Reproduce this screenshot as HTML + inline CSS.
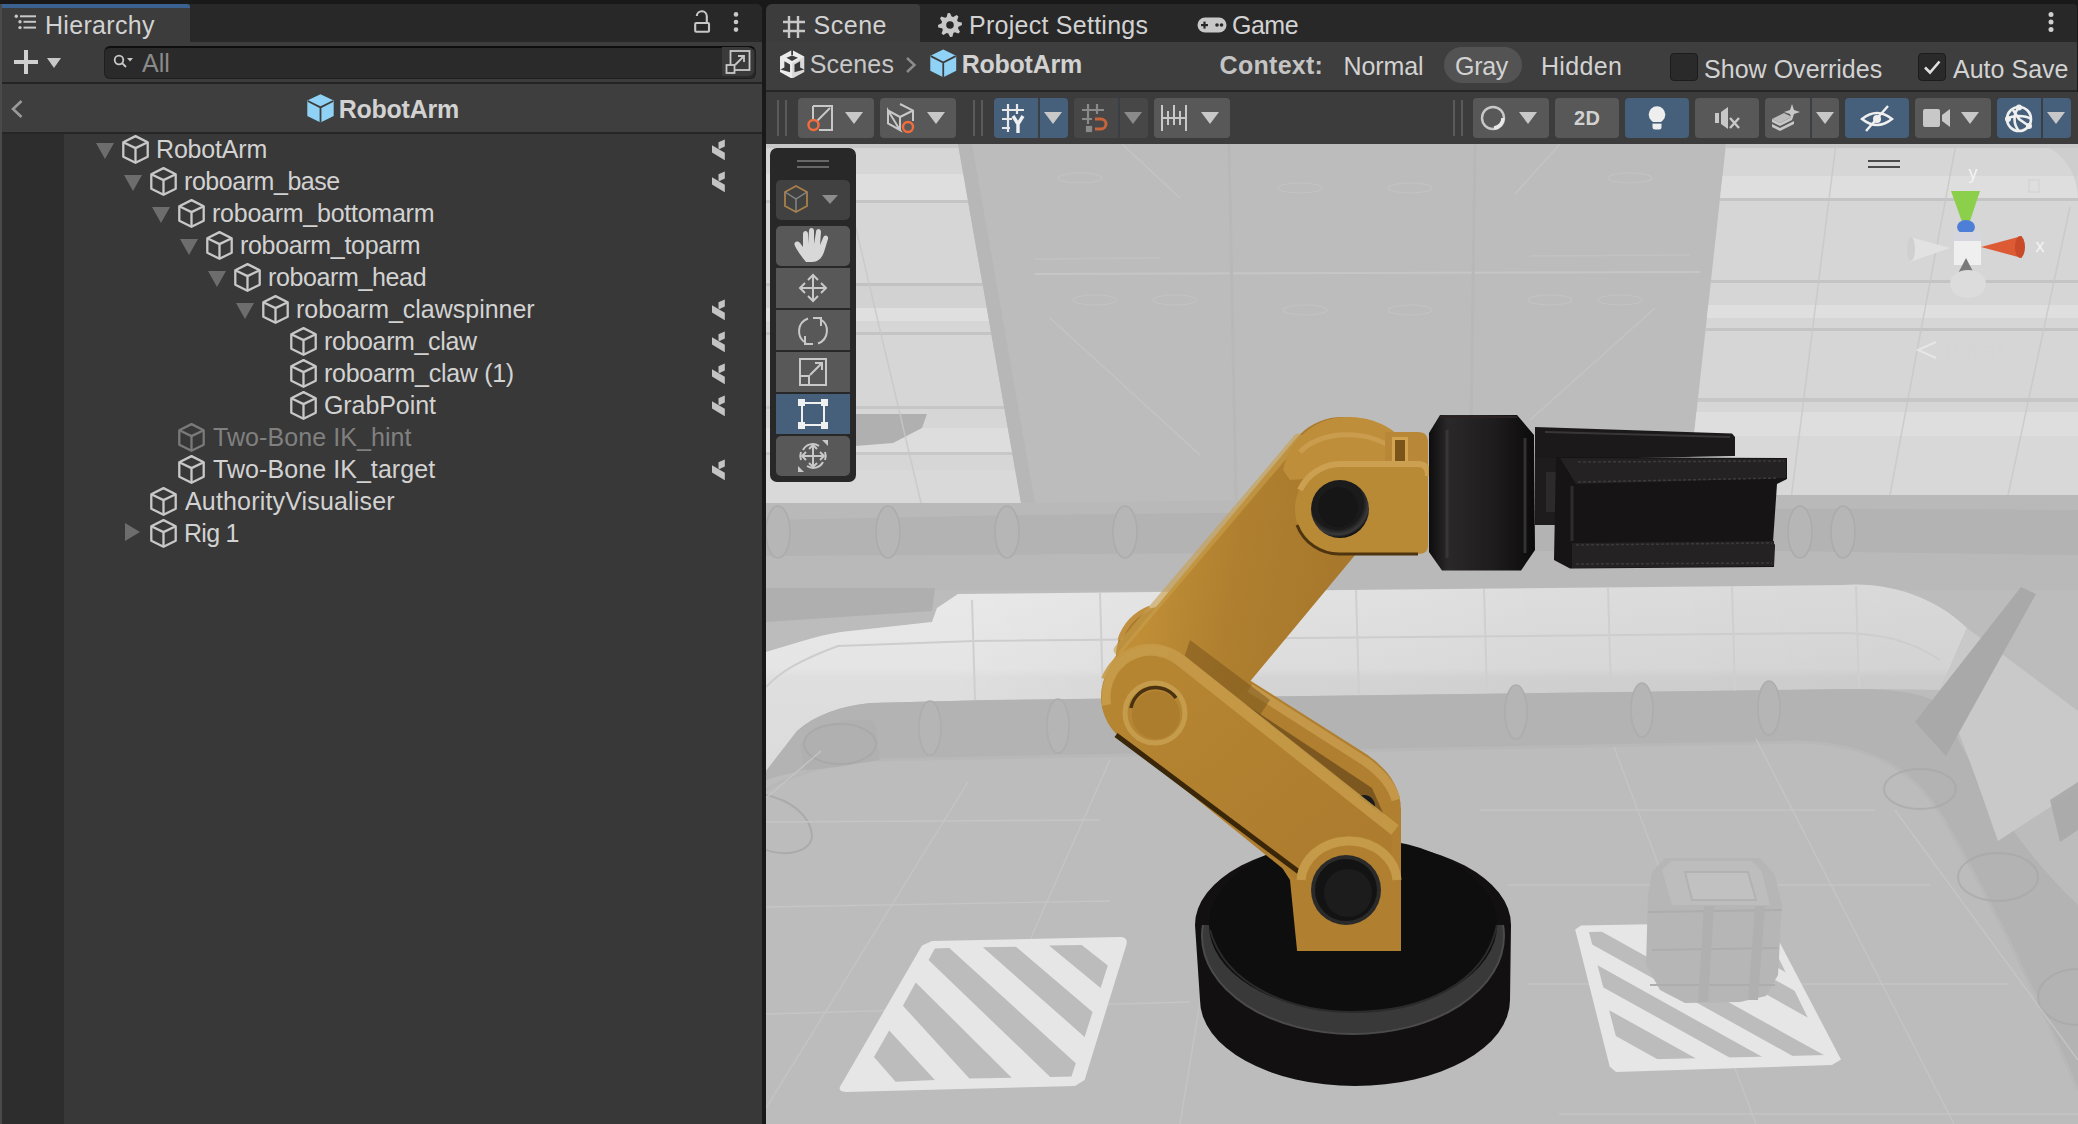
<!DOCTYPE html>
<html><head><meta charset="utf-8"><style>
html,body{margin:0;padding:0;width:2078px;height:1124px;overflow:hidden;background:#191919;font-family:'Liberation Sans', sans-serif}
</style></head><body>
<div style="position:relative;width:2078px;height:1124px;overflow:hidden">
<div style="position:absolute;left:0;top:4px;width:762px;height:1120px;background:#383838;border-top-right-radius:6px;overflow:hidden"><div style="position:absolute;left:0;top:0;width:762px;height:38px;background:#282828"></div><div style="position:absolute;left:2px;top:0;width:188px;height:38px;background:#3c3c3c;border-top-right-radius:4px"></div><div style="position:absolute;left:0;top:0;width:190px;height:4px;background:#3a6190;border-top-right-radius:3px"></div></div><div style="position:absolute;left:0;top:4px;width:2px;height:1120px;background:#4a4a4a"></div><svg style="position:absolute;left:14px;top:14px" width="24" height="18" viewBox="0 0 24 18"><g fill="#c8c8c8"><circle cx="2.3" cy="2.3" r="1.7"/><circle cx="6" cy="7.8" r="1.7"/><circle cx="6" cy="13.6" r="1.7"/><rect x="6" y="1.3" width="16" height="2"/><rect x="9.5" y="6.8" width="12.5" height="2"/><rect x="9.5" y="12.6" width="12.5" height="2"/></g></svg><div style="position:absolute;left:45px;top:13px;font:normal 25px/25px 'Liberation Sans', sans-serif;color:#d2d2d2;white-space:pre;letter-spacing:0.32px">Hierarchy</div><svg style="position:absolute;left:690px;top:10px" width="24" height="24" viewBox="690 10 24 24"><g fill="none" stroke="#c8c8c8" stroke-width="2.1"><path d="M696.8 16 A5 5 0 0 1 706.8 16.5 V23"/><rect x="695.2" y="23" width="13.8" height="8.8" rx="1"/></g></svg><svg style="position:absolute;left:731px;top:11px" width="10" height="24" viewBox="0 0 10 24"><g fill="#c8c8c8"><circle cx="5" cy="3.4" r="2.3"/><circle cx="5" cy="11" r="2.3"/><circle cx="5" cy="18.6" r="2.3"/></g></svg><div style="position:absolute;left:2px;top:42px;width:760px;height:40px;background:#3c3c3c"></div><div style="position:absolute;left:2px;top:82px;width:760px;height:2px;background:#242424"></div><svg style="position:absolute;left:13px;top:50px" width="26" height="26" viewBox="0 0 26 26"><g fill="#d0d0d0"><rect x="11" y="0" width="4" height="24"/><rect x="1" y="10" width="24" height="4"/></g></svg><svg style="position:absolute;left:47px;top:58px" width="14" height="10" viewBox="0 0 14 10"><path d="M0 0 L14 0 L7.0 10 Z" fill="#c8c8c8"/></svg><div style="position:absolute;left:104px;top:46px;width:650px;height:30px;background:#2a2a2a;border:1px solid #1f1f1f;border-top:2px solid #0e0e0e;border-radius:6px"></div><div style="position:absolute;left:722px;top:47px;width:32px;height:29px;background:#3a3a3a;border-radius:0 6px 6px 0"></div><svg style="position:absolute;left:113px;top:54px" width="22" height="18" viewBox="0 0 22 18"><g fill="none" stroke="#c8c8c8" stroke-width="1.8"><circle cx="6" cy="6" r="4.3"/><path d="M9 9 L13 13"/></g><path d="M14 4 L20 4 L17 7.5 Z" fill="#c8c8c8"/></svg><div style="position:absolute;left:142px;top:50.5px;font:normal 25px/25px 'Liberation Sans', sans-serif;color:#8a8a8a;white-space:pre;">All</div><svg style="position:absolute;left:725px;top:49px" width="26" height="26" viewBox="0 0 26 26"><g fill="none" stroke="#c8c8c8" stroke-width="1.8"><rect x="5.5" y="2" width="19" height="19"/><rect x="1.5" y="16" width="8" height="8" fill="#3a3a3a"/><path d="M10 16 L19 7 M13 7 L19 7 L19 13"/></g></svg><div style="position:absolute;left:2px;top:84px;width:760px;height:48px;background:#3e3e3e"></div><div style="position:absolute;left:2px;top:132px;width:760px;height:2px;background:#262626"></div><svg style="position:absolute;left:10px;top:99px" width="14" height="20" viewBox="0 0 14 20"><path d="M11.5 2 L3 10 L11.5 18" fill="none" stroke="#9a9a9a" stroke-width="2.6"/></svg><svg style="position:absolute;left:306.5px;top:93.7px" width="27" height="29" viewBox="0 0 27 29"><path d="M13.5 0.3 L26.7 6.6 L26.7 21.9 L13.5 28.6 L0.3 21.9 L0.3 6.6 Z" fill="#8fd2f5"/><path d="M0.8 7 L13.5 13.4 L26.2 7 M13.5 13.4 L13.5 28.6" fill="none" stroke="#3e3e3e" stroke-width="1.8"/></svg><div style="position:absolute;left:338.7px;top:97px;font:bold 25px/25px 'Liberation Sans', sans-serif;color:#d2d2d2;white-space:pre;letter-spacing:-0.25px">RobotArm</div><div style="position:absolute;left:2px;top:134px;width:62px;height:990px;background:#2d2d2d"></div><svg style="position:absolute;left:96px;top:143px" width="18" height="16" viewBox="0 0 18 16"><path d="M0 0 L18 0 L9.0 16 Z" fill="#6d6d6d"/></svg><svg style="position:absolute;left:120.5px;top:134px;opacity:1.0" width="30" height="31" viewBox="-1.5 -1.5 30 31"><g fill="none" stroke="#c8c8c8" stroke-width="2.3" stroke-linejoin="round"><path d="M13 0.6 L25.2 6.7 L25.2 21.2 L13 27.3 L0.8 21.2 L0.8 6.7 Z"/><path d="M0.8 6.7 L13 12.6 L25.2 6.7 M13 12.6 L13 27.3"/></g></svg><div style="position:absolute;left:156px;top:136.5px;font:normal 25px/25px 'Liberation Sans', sans-serif;color:#d2d2d2;white-space:pre;letter-spacing:-0.17px">RobotArm</div><svg style="position:absolute;left:712px;top:139px" width="14" height="22" viewBox="0 0 14 22"><g fill="#c4c4c4"><path d="M6.5 3.2 L12.8 0.5 L12.8 7.4 L7.6 10.1 L6.5 9.6 Z"/><path d="M0 6.3 L12.8 13.8 L12.8 21.2 L0 13.6 Z"/></g></svg><svg style="position:absolute;left:124px;top:175px" width="18" height="16" viewBox="0 0 18 16"><path d="M0 0 L18 0 L9.0 16 Z" fill="#6d6d6d"/></svg><svg style="position:absolute;left:148.5px;top:166px;opacity:1.0" width="30" height="31" viewBox="-1.5 -1.5 30 31"><g fill="none" stroke="#c8c8c8" stroke-width="2.3" stroke-linejoin="round"><path d="M13 0.6 L25.2 6.7 L25.2 21.2 L13 27.3 L0.8 21.2 L0.8 6.7 Z"/><path d="M0.8 6.7 L13 12.6 L25.2 6.7 M13 12.6 L13 27.3"/></g></svg><div style="position:absolute;left:184px;top:168.5px;font:normal 25px/25px 'Liberation Sans', sans-serif;color:#d2d2d2;white-space:pre;letter-spacing:-0.45px">roboarm_base</div><svg style="position:absolute;left:712px;top:171px" width="14" height="22" viewBox="0 0 14 22"><g fill="#c4c4c4"><path d="M6.5 3.2 L12.8 0.5 L12.8 7.4 L7.6 10.1 L6.5 9.6 Z"/><path d="M0 6.3 L12.8 13.8 L12.8 21.2 L0 13.6 Z"/></g></svg><svg style="position:absolute;left:152px;top:207px" width="18" height="16" viewBox="0 0 18 16"><path d="M0 0 L18 0 L9.0 16 Z" fill="#6d6d6d"/></svg><svg style="position:absolute;left:176.5px;top:198px;opacity:1.0" width="30" height="31" viewBox="-1.5 -1.5 30 31"><g fill="none" stroke="#c8c8c8" stroke-width="2.3" stroke-linejoin="round"><path d="M13 0.6 L25.2 6.7 L25.2 21.2 L13 27.3 L0.8 21.2 L0.8 6.7 Z"/><path d="M0.8 6.7 L13 12.6 L25.2 6.7 M13 12.6 L13 27.3"/></g></svg><div style="position:absolute;left:212px;top:200.5px;font:normal 25px/25px 'Liberation Sans', sans-serif;color:#d2d2d2;white-space:pre;letter-spacing:-0.25px">roboarm_bottomarm</div><svg style="position:absolute;left:180px;top:239px" width="18" height="16" viewBox="0 0 18 16"><path d="M0 0 L18 0 L9.0 16 Z" fill="#6d6d6d"/></svg><svg style="position:absolute;left:204.5px;top:230px;opacity:1.0" width="30" height="31" viewBox="-1.5 -1.5 30 31"><g fill="none" stroke="#c8c8c8" stroke-width="2.3" stroke-linejoin="round"><path d="M13 0.6 L25.2 6.7 L25.2 21.2 L13 27.3 L0.8 21.2 L0.8 6.7 Z"/><path d="M0.8 6.7 L13 12.6 L25.2 6.7 M13 12.6 L13 27.3"/></g></svg><div style="position:absolute;left:240px;top:232.5px;font:normal 25px/25px 'Liberation Sans', sans-serif;color:#d2d2d2;white-space:pre;letter-spacing:-0.32px">roboarm_toparm</div><svg style="position:absolute;left:208px;top:271px" width="18" height="16" viewBox="0 0 18 16"><path d="M0 0 L18 0 L9.0 16 Z" fill="#6d6d6d"/></svg><svg style="position:absolute;left:232.5px;top:262px;opacity:1.0" width="30" height="31" viewBox="-1.5 -1.5 30 31"><g fill="none" stroke="#c8c8c8" stroke-width="2.3" stroke-linejoin="round"><path d="M13 0.6 L25.2 6.7 L25.2 21.2 L13 27.3 L0.8 21.2 L0.8 6.7 Z"/><path d="M0.8 6.7 L13 12.6 L25.2 6.7 M13 12.6 L13 27.3"/></g></svg><div style="position:absolute;left:268px;top:264.5px;font:normal 25px/25px 'Liberation Sans', sans-serif;color:#d2d2d2;white-space:pre;letter-spacing:-0.37px">roboarm_head</div><svg style="position:absolute;left:236px;top:303px" width="18" height="16" viewBox="0 0 18 16"><path d="M0 0 L18 0 L9.0 16 Z" fill="#6d6d6d"/></svg><svg style="position:absolute;left:260.5px;top:294px;opacity:1.0" width="30" height="31" viewBox="-1.5 -1.5 30 31"><g fill="none" stroke="#c8c8c8" stroke-width="2.3" stroke-linejoin="round"><path d="M13 0.6 L25.2 6.7 L25.2 21.2 L13 27.3 L0.8 21.2 L0.8 6.7 Z"/><path d="M0.8 6.7 L13 12.6 L25.2 6.7 M13 12.6 L13 27.3"/></g></svg><div style="position:absolute;left:296px;top:296.5px;font:normal 25px/25px 'Liberation Sans', sans-serif;color:#d2d2d2;white-space:pre;letter-spacing:-0.02px">roboarm_clawspinner</div><svg style="position:absolute;left:712px;top:299px" width="14" height="22" viewBox="0 0 14 22"><g fill="#c4c4c4"><path d="M6.5 3.2 L12.8 0.5 L12.8 7.4 L7.6 10.1 L6.5 9.6 Z"/><path d="M0 6.3 L12.8 13.8 L12.8 21.2 L0 13.6 Z"/></g></svg><svg style="position:absolute;left:288.5px;top:326px;opacity:1.0" width="30" height="31" viewBox="-1.5 -1.5 30 31"><g fill="none" stroke="#c8c8c8" stroke-width="2.3" stroke-linejoin="round"><path d="M13 0.6 L25.2 6.7 L25.2 21.2 L13 27.3 L0.8 21.2 L0.8 6.7 Z"/><path d="M0.8 6.7 L13 12.6 L25.2 6.7 M13 12.6 L13 27.3"/></g></svg><div style="position:absolute;left:324px;top:328.5px;font:normal 25px/25px 'Liberation Sans', sans-serif;color:#d2d2d2;white-space:pre;letter-spacing:-0.36px">roboarm_claw</div><svg style="position:absolute;left:712px;top:331px" width="14" height="22" viewBox="0 0 14 22"><g fill="#c4c4c4"><path d="M6.5 3.2 L12.8 0.5 L12.8 7.4 L7.6 10.1 L6.5 9.6 Z"/><path d="M0 6.3 L12.8 13.8 L12.8 21.2 L0 13.6 Z"/></g></svg><svg style="position:absolute;left:288.5px;top:358px;opacity:1.0" width="30" height="31" viewBox="-1.5 -1.5 30 31"><g fill="none" stroke="#c8c8c8" stroke-width="2.3" stroke-linejoin="round"><path d="M13 0.6 L25.2 6.7 L25.2 21.2 L13 27.3 L0.8 21.2 L0.8 6.7 Z"/><path d="M0.8 6.7 L13 12.6 L25.2 6.7 M13 12.6 L13 27.3"/></g></svg><div style="position:absolute;left:324px;top:360.5px;font:normal 25px/25px 'Liberation Sans', sans-serif;color:#d2d2d2;white-space:pre;letter-spacing:-0.29px">roboarm_claw (1)</div><svg style="position:absolute;left:712px;top:363px" width="14" height="22" viewBox="0 0 14 22"><g fill="#c4c4c4"><path d="M6.5 3.2 L12.8 0.5 L12.8 7.4 L7.6 10.1 L6.5 9.6 Z"/><path d="M0 6.3 L12.8 13.8 L12.8 21.2 L0 13.6 Z"/></g></svg><svg style="position:absolute;left:288.5px;top:390px;opacity:1.0" width="30" height="31" viewBox="-1.5 -1.5 30 31"><g fill="none" stroke="#c8c8c8" stroke-width="2.3" stroke-linejoin="round"><path d="M13 0.6 L25.2 6.7 L25.2 21.2 L13 27.3 L0.8 21.2 L0.8 6.7 Z"/><path d="M0.8 6.7 L13 12.6 L25.2 6.7 M13 12.6 L13 27.3"/></g></svg><div style="position:absolute;left:324px;top:392.5px;font:normal 25px/25px 'Liberation Sans', sans-serif;color:#d2d2d2;white-space:pre;letter-spacing:-0.08px">GrabPoint</div><svg style="position:absolute;left:712px;top:395px" width="14" height="22" viewBox="0 0 14 22"><g fill="#c4c4c4"><path d="M6.5 3.2 L12.8 0.5 L12.8 7.4 L7.6 10.1 L6.5 9.6 Z"/><path d="M0 6.3 L12.8 13.8 L12.8 21.2 L0 13.6 Z"/></g></svg><svg style="position:absolute;left:176.5px;top:422px;opacity:1.0" width="30" height="31" viewBox="-1.5 -1.5 30 31"><g fill="none" stroke="#7a7a7a" stroke-width="2.3" stroke-linejoin="round"><path d="M13 0.6 L25.2 6.7 L25.2 21.2 L13 27.3 L0.8 21.2 L0.8 6.7 Z"/><path d="M0.8 6.7 L13 12.6 L25.2 6.7 M13 12.6 L13 27.3"/></g></svg><div style="position:absolute;left:213px;top:424.5px;font:normal 25px/25px 'Liberation Sans', sans-serif;color:#808080;white-space:pre;letter-spacing:0.08px">Two-Bone IK_hint</div><svg style="position:absolute;left:176.5px;top:454px;opacity:1.0" width="30" height="31" viewBox="-1.5 -1.5 30 31"><g fill="none" stroke="#c8c8c8" stroke-width="2.3" stroke-linejoin="round"><path d="M13 0.6 L25.2 6.7 L25.2 21.2 L13 27.3 L0.8 21.2 L0.8 6.7 Z"/><path d="M0.8 6.7 L13 12.6 L25.2 6.7 M13 12.6 L13 27.3"/></g></svg><div style="position:absolute;left:213px;top:456.5px;font:normal 25px/25px 'Liberation Sans', sans-serif;color:#d2d2d2;white-space:pre;letter-spacing:0.07px">Two-Bone IK_target</div><svg style="position:absolute;left:712px;top:459px" width="14" height="22" viewBox="0 0 14 22"><g fill="#c4c4c4"><path d="M6.5 3.2 L12.8 0.5 L12.8 7.4 L7.6 10.1 L6.5 9.6 Z"/><path d="M0 6.3 L12.8 13.8 L12.8 21.2 L0 13.6 Z"/></g></svg><svg style="position:absolute;left:148.5px;top:486px;opacity:1.0" width="30" height="31" viewBox="-1.5 -1.5 30 31"><g fill="none" stroke="#c8c8c8" stroke-width="2.3" stroke-linejoin="round"><path d="M13 0.6 L25.2 6.7 L25.2 21.2 L13 27.3 L0.8 21.2 L0.8 6.7 Z"/><path d="M0.8 6.7 L13 12.6 L25.2 6.7 M13 12.6 L13 27.3"/></g></svg><div style="position:absolute;left:185px;top:488.5px;font:normal 25px/25px 'Liberation Sans', sans-serif;color:#d2d2d2;white-space:pre;letter-spacing:0.17px">AuthorityVisualiser</div><svg style="position:absolute;left:125px;top:523px" width="15" height="18" viewBox="0 0 15 18"><path d="M0 0 L15 9.0 L0 18 Z" fill="#6d6d6d"/></svg><svg style="position:absolute;left:148.5px;top:518px;opacity:1.0" width="30" height="31" viewBox="-1.5 -1.5 30 31"><g fill="none" stroke="#c8c8c8" stroke-width="2.3" stroke-linejoin="round"><path d="M13 0.6 L25.2 6.7 L25.2 21.2 L13 27.3 L0.8 21.2 L0.8 6.7 Z"/><path d="M0.8 6.7 L13 12.6 L25.2 6.7 M13 12.6 L13 27.3"/></g></svg><div style="position:absolute;left:184px;top:520.5px;font:normal 25px/25px 'Liberation Sans', sans-serif;color:#d2d2d2;white-space:pre;letter-spacing:-0.74px">Rig 1</div>
<div style="position:absolute;left:766px;top:4px;width:1312px;height:1120px;background:#3c3c3c;border-top-left-radius:6px;border-top-right-radius:6px;overflow:hidden"><div style="position:absolute;left:0;top:0;width:1312px;height:38px;background:#282828"></div><div style="position:absolute;left:0;top:0;width:154px;height:38px;background:#3c3c3c;border-top-left-radius:6px;border-top-right-radius:4px"></div><div style="position:absolute;left:0;top:38px;width:1312px;height:48px;background:#3e3e3e"></div><div style="position:absolute;left:0;top:86px;width:1312px;height:2px;background:#262626"></div></div><svg style="position:absolute;left:782px;top:15px" width="24" height="24" viewBox="0 0 24 24"><g stroke="#c8c8c8" stroke-width="2.4"><path d="M7 1 V23 M16 1 V23 M1 7 H23 M1 16 H23"/></g></svg><div style="position:absolute;left:813.6px;top:12.5px;font:normal 25px/25px 'Liberation Sans', sans-serif;color:#d2d2d2;white-space:pre;letter-spacing:0.5px">Scene</div><svg style="position:absolute;left:938px;top:12.5px" width="24" height="24" viewBox="0 0 24 24"><polygon points="23.76,9.62 24.00,11.96 20.44,13.65 19.96,15.26 22.00,18.63 20.52,20.45 16.80,19.13 15.32,19.93 14.38,23.76 12.04,24.00 10.35,20.44 8.74,19.96 5.37,22.00 3.55,20.52 4.87,16.80 4.07,15.32 0.24,14.38 0.00,12.04 3.56,10.35 4.04,8.74 2.00,5.37 3.48,3.55 7.20,4.87 8.68,4.07 9.62,0.24 11.96,0.00 13.65,3.56 15.26,4.04 18.63,2.00 20.45,3.48 19.13,7.20 19.93,8.68" fill="#c8c8c8"/><circle cx="12" cy="12" r="3.8" fill="#282828"/></svg><div style="position:absolute;left:969px;top:12.5px;font:normal 25px/25px 'Liberation Sans', sans-serif;color:#d2d2d2;white-space:pre;letter-spacing:0.26px">Project Settings</div><svg style="position:absolute;left:1197px;top:17px" width="30" height="16" viewBox="0 0 30 16"><rect x="0.5" y="0.5" width="29" height="15" rx="7.5" fill="#c8c8c8"/><g fill="#282828"><rect x="4" y="7" width="7" height="2.2"/><rect x="6.4" y="4.6" width="2.2" height="7"/><circle cx="20" cy="8" r="1.8"/><circle cx="24.5" cy="8" r="1.8"/></g></svg><div style="position:absolute;left:1232px;top:12.5px;font:normal 25px/25px 'Liberation Sans', sans-serif;color:#d2d2d2;white-space:pre;letter-spacing:-0.5px">Game</div><svg style="position:absolute;left:2046px;top:11px" width="10" height="24" viewBox="0 0 10 24"><g fill="#cfcfcf"><circle cx="5" cy="3.4" r="2.5"/><circle cx="5" cy="11" r="2.5"/><circle cx="5" cy="18.5" r="2.5"/></g></svg><div style="position:absolute;left:2077px;top:4px;width:1px;height:1120px;background:#1a1a1a"></div><svg style="position:absolute;left:780px;top:49.5px" width="24.5" height="28.7" viewBox="220 215 550 645"><path d="M490 215 L765 360 L765 710 L490 860 L220 710 L220 360 Z" fill="#ececec"/><g fill="#3c3c3c"><path d="M490 340 L625 390 L490 465 L365 390 Z"/><rect x="472" y="205" width="40" height="125"/><path d="M318 470 L445 540 L445 718 L228 655 L318 610 Z"/><path d="M672 470 L545 540 L545 718 L762 655 L672 610 Z"/></g><path d="M490 860 L765 710 L765 360 L490 520 Z" fill="#000" opacity="0.08"/></svg><div style="position:absolute;left:809.8px;top:52px;font:normal 25px/25px 'Liberation Sans', sans-serif;color:#c8c8c8;white-space:pre;letter-spacing:0.14px">Scenes</div><svg style="position:absolute;left:904px;top:56px" width="14" height="18" viewBox="0 0 14 18"><path d="M3 2 L10.5 9 L3 16" fill="none" stroke="#8c8c8c" stroke-width="2.4"/></svg><svg style="position:absolute;left:930px;top:49px" width="26.5" height="29" viewBox="0 0 27 29"><path d="M13.5 0.3 L26.7 6.6 L26.7 21.9 L13.5 28.6 L0.3 21.9 L0.3 6.6 Z" fill="#8fd2f5"/><path d="M0.8 7 L13.5 13.4 L26.2 7 M13.5 13.4 L13.5 28.6" fill="none" stroke="#3c3c3c" stroke-width="1.8"/></svg><div style="position:absolute;left:961.7px;top:51.5px;font:bold 25px/25px 'Liberation Sans', sans-serif;color:#d2d2d2;white-space:pre;letter-spacing:-0.25px">RobotArm</div><div style="position:absolute;left:1219.6px;top:52.5px;font:bold 25px/25px 'Liberation Sans', sans-serif;color:#c4c4c4;white-space:pre;letter-spacing:0.28px">Context:</div><div style="position:absolute;left:1343.5px;top:54px;font:normal 25px/25px 'Liberation Sans', sans-serif;color:#d2d2d2;white-space:pre;letter-spacing:-0.1px">Normal</div><div style="position:absolute;left:1444px;top:47px;width:78px;height:36px;border-radius:18px;background:#535353"></div><div style="position:absolute;left:1455px;top:54px;font:normal 25px/25px 'Liberation Sans', sans-serif;color:#d2d2d2;white-space:pre;letter-spacing:-0.32px">Gray</div><div style="position:absolute;left:1540.9px;top:54px;font:normal 25px/25px 'Liberation Sans', sans-serif;color:#d2d2d2;white-space:pre;letter-spacing:0.34px">Hidden</div><div style="position:absolute;left:1670px;top:53px;width:26px;height:26px;border-radius:4px;background:#2a2a2a;border:1px solid #1c1c1c"></div><div style="position:absolute;left:1704px;top:56.5px;font:normal 25px/25px 'Liberation Sans', sans-serif;color:#d2d2d2;white-space:pre;letter-spacing:0.03px">Show Overrides</div><div style="position:absolute;left:1918px;top:53px;width:26px;height:26px;border-radius:4px;background:#2a2a2a;border:1px solid #1c1c1c"></div><svg style="position:absolute;left:1922px;top:57px" width="20" height="20" viewBox="0 0 20 20"><path d="M3 10.5 L8 15.5 L17.5 4.5" fill="none" stroke="#e0e0e0" stroke-width="2.6"/></svg><div style="position:absolute;left:1953px;top:56.5px;font:normal 25px/25px 'Liberation Sans', sans-serif;color:#d2d2d2;white-space:pre;letter-spacing:0.02px">Auto Save</div><div style="position:absolute;left:766px;top:92px;width:1312px;height:52px;background:#3c3c3c"></div><div style="position:absolute;left:777px;top:100px;width:2px;height:36px;background:#5a5a5a"></div><div style="position:absolute;left:785px;top:100px;width:2px;height:36px;background:#5a5a5a"></div><div style="position:absolute;left:973px;top:100px;width:2px;height:36px;background:#5a5a5a"></div><div style="position:absolute;left:981px;top:100px;width:2px;height:36px;background:#5a5a5a"></div><div style="position:absolute;left:1453px;top:100px;width:2px;height:36px;background:#5a5a5a"></div><div style="position:absolute;left:1461px;top:100px;width:2px;height:36px;background:#5a5a5a"></div><div style="position:absolute;left:798px;top:98px;width:76px;height:40px;border-radius:4px;background:#585858"></div><svg style="position:absolute;left:845px;top:112px" width="18" height="12" viewBox="0 0 18 12"><path d="M0 0 L18 0 L9.0 12 Z" fill="#c8c8c8"/></svg><div style="position:absolute;left:880px;top:98px;width:76px;height:40px;border-radius:4px;background:#585858"></div><svg style="position:absolute;left:927px;top:112px" width="18" height="12" viewBox="0 0 18 12"><path d="M0 0 L18 0 L9.0 12 Z" fill="#c8c8c8"/></svg><div style="position:absolute;left:994px;top:98px;width:74px;height:40px;border-radius:4px;background:#46607c"></div><div style="position:absolute;left:1038px;top:98px;width:2px;height:40px;background:#3a3f46"></div><svg style="position:absolute;left:1044px;top:112px" width="18" height="12" viewBox="0 0 18 12"><path d="M0 0 L18 0 L9.0 12 Z" fill="#c8c8c8"/></svg><div style="position:absolute;left:1074px;top:98px;width:74px;height:40px;border-radius:4px;background:#474747"></div><div style="position:absolute;left:1118px;top:98px;width:2px;height:40px;background:#3a3f46"></div><svg style="position:absolute;left:1124px;top:112px" width="18" height="12" viewBox="0 0 18 12"><path d="M0 0 L18 0 L9.0 12 Z" fill="#8a8a8a"/></svg><div style="position:absolute;left:1154px;top:98px;width:76px;height:40px;border-radius:4px;background:#585858"></div><svg style="position:absolute;left:1201px;top:112px" width="18" height="12" viewBox="0 0 18 12"><path d="M0 0 L18 0 L9.0 12 Z" fill="#c8c8c8"/></svg><div style="position:absolute;left:1473px;top:98px;width:76px;height:40px;border-radius:4px;background:#585858"></div><svg style="position:absolute;left:1519px;top:112px" width="18" height="12" viewBox="0 0 18 12"><path d="M0 0 L18 0 L9.0 12 Z" fill="#c8c8c8"/></svg><div style="position:absolute;left:1555px;top:98px;width:64px;height:40px;border-radius:4px;background:#585858"></div><div style="position:absolute;left:1625px;top:98px;width:64px;height:40px;border-radius:4px;background:#46607c"></div><div style="position:absolute;left:1695px;top:98px;width:64px;height:40px;border-radius:4px;background:#585858"></div><div style="position:absolute;left:1765px;top:98px;width:74px;height:40px;border-radius:4px;background:#585858"></div><div style="position:absolute;left:1810px;top:98px;width:2px;height:40px;background:#3a3f46"></div><svg style="position:absolute;left:1816px;top:112px" width="18" height="12" viewBox="0 0 18 12"><path d="M0 0 L18 0 L9.0 12 Z" fill="#c8c8c8"/></svg><div style="position:absolute;left:1845px;top:98px;width:64px;height:40px;border-radius:4px;background:#46607c"></div><div style="position:absolute;left:1915px;top:98px;width:76px;height:40px;border-radius:4px;background:#585858"></div><svg style="position:absolute;left:1961px;top:112px" width="18" height="12" viewBox="0 0 18 12"><path d="M0 0 L18 0 L9.0 12 Z" fill="#c8c8c8"/></svg><div style="position:absolute;left:1997px;top:98px;width:74px;height:40px;border-radius:4px;background:#46607c"></div><div style="position:absolute;left:2041px;top:98px;width:2px;height:40px;background:#3a3f46"></div><svg style="position:absolute;left:2047px;top:112px" width="18" height="12" viewBox="0 0 18 12"><path d="M0 0 L18 0 L9.0 12 Z" fill="#c8c8c8"/></svg><svg style="position:absolute;left:805px;top:103px" width="30" height="30" viewBox="0 0 30 30"><g fill="none" stroke="#c8c8c8" stroke-width="2"><path d="M8 3 H27 V27 H14"/><path d="M8 3 V17"/><path d="M12 18 L25 5"/></g><circle cx="8.5" cy="22" r="5" fill="none" stroke="#f26d3d" stroke-width="2.4"/></svg><svg style="position:absolute;left:886px;top:102px" width="32" height="32" viewBox="0 0 32 32"><g fill="none" stroke="#c8c8c8" stroke-width="2"><path d="M14 2 L27 8.5 L27 19 M14 28 L2 21.5 L2 8.5 Z M2 8.5 L14 15 L27 8.5 M14 15 L14 28"/></g><circle cx="22" cy="25" r="5" fill="none" stroke="#f26d3d" stroke-width="2.4"/></svg><svg style="position:absolute;left:1000px;top:102px" width="30" height="32" viewBox="0 0 30 32"><g fill="none" stroke="#e8e8e8" stroke-width="2.2"><path d="M8 2 V30 M17 2 V12 M2 8 H24 M2 17 H12 M2 26 H10"/></g><path d="M13 14 L18 22 L23 14 M18 22 V31" fill="none" stroke="#f0f0f0" stroke-width="3.4"/></svg><svg style="position:absolute;left:1080px;top:102px" width="30" height="32" viewBox="0 0 30 32"><g fill="none" stroke="#8a8a8a" stroke-width="2.2"><path d="M8 2 V22 M17 2 V12 M2 8 H24 M2 17 H12"/><rect x="7" y="25" width="4" height="4" fill="#8a8a8a"/></g><path d="M15 17 H21 A5 5 0 0 1 21 27 H15" fill="none" stroke="#c8643c" stroke-width="3"/></svg><svg style="position:absolute;left:1160px;top:103px" width="28" height="30" viewBox="0 0 28 30"><g stroke="#c8c8c8" stroke-width="2"><path d="M2 2 V28 M26 2 V28 M8 8 V22 M14 2 V22 M20 8 V22 M2 15 H26"/></g></svg><svg style="position:absolute;left:1480px;top:104px" width="28" height="28" viewBox="0 0 28 28"><circle cx="13" cy="14" r="11" fill="none" stroke="#c8c8c8" stroke-width="2.4"/><path d="M14 24 A10 10 0 0 0 23 14" fill="none" stroke="#e8e8e8" stroke-width="3.5"/></svg><div style="position:absolute;left:1574px;top:108px;font:bold 20px/20px 'Liberation Sans', sans-serif;color:#d2d2d2;white-space:pre;letter-spacing:0.3px">2D</div><svg style="position:absolute;left:1645px;top:103px" width="24" height="30" viewBox="1645 103 24 30"><circle cx="1657" cy="114.5" r="8.3" fill="#eeeeee"/><path d="M1652.5 120 L1661.5 120 L1661.5 127 Q1661.5 129.5 1659 129.5 L1655 129.5 Q1652.5 129.5 1652.5 127 Z" fill="#eeeeee"/><rect x="1652" y="122" width="10" height="1.6" fill="#46607c"/></svg><svg style="position:absolute;left:1714px;top:106px" width="30" height="26" viewBox="0 0 30 26"><g fill="#c8c8c8"><rect x="1" y="7" width="4" height="10"/><path d="M7 6 L14 1 L14 23 L7 18 Z"/></g><path d="M16 12 L25 22 M25 12 L16 22" stroke="#c8c8c8" stroke-width="2.4"/></svg><svg style="position:absolute;left:1770px;top:102px" width="32" height="32" viewBox="0 0 32 32"><g fill="#c8c8c8"><path d="M2 17 L14 11 L22 15 L10 21 Z" opacity="0.9"/><path d="M2 22 L10 26 L24 19 L24 22 L10 29 L2 25 Z"/><path d="M2 17 L10 21 L22 15 L22 18 L10 24 L2 20 Z"/><path d="M22 2 L24 8 L30 10 L24 12 L22 18 L20 12 L14 10 L20 8 Z"/></g></svg><svg style="position:absolute;left:1860px;top:104px" width="34" height="30" viewBox="0 0 34 30"><g fill="none" stroke="#f0f0f0" stroke-width="2.4"><path d="M2 15 Q17 3 32 15 Q17 27 2 15 Z"/><path d="M6 27 L28 2"/></g><circle cx="17" cy="15" r="4" fill="#f0f0f0"/></svg><svg style="position:absolute;left:1922px;top:106px" width="30" height="24" viewBox="0 0 30 24"><g fill="#c8c8c8"><rect x="1" y="3" width="17" height="18" rx="2"/><path d="M20 9 L28 3 L28 21 L20 15 Z"/></g></svg><svg style="position:absolute;left:2003px;top:102px" width="32" height="32" viewBox="0 0 32 32"><g fill="none" stroke="#f0f0f0" stroke-width="2.6"><circle cx="16" cy="17" r="12"/><path d="M16 5 C10 12 10 22 16 29 M4 17 C10 13 22 13 28 17 M10 8 L16 17 L26 24"/></g><g fill="#f0f0f0"><circle cx="16" cy="5.5" r="3"/><circle cx="5" cy="17" r="3"/><circle cx="26" cy="24" r="3"/></g></svg>
<svg style="position:absolute;left:766px;top:144px" width="1312" height="980" viewBox="766 144 1312 980"><defs>
<linearGradient id="gUp" x1="0" y1="0" x2="1" y2="0.2">
 <stop offset="0" stop-color="#c08e36"/><stop offset="0.45" stop-color="#b08030"/><stop offset="1" stop-color="#a8782c"/>
</linearGradient>
<linearGradient id="gLow" x1="0" y1="0" x2="1" y2="1">
 <stop offset="0" stop-color="#b58532"/><stop offset="1" stop-color="#ad7c2e"/>
</linearGradient>
<linearGradient id="gPuckSide" x1="0" y1="0" x2="1" y2="0">
 <stop offset="0" stop-color="#100f0f"/><stop offset="0.5" stop-color="#151414"/><stop offset="1" stop-color="#0c0b0b"/>
</linearGradient>
<linearGradient id="gBlk" x1="0" y1="0" x2="1" y2="0">
 <stop offset="0" stop-color="#0e0d0d"/><stop offset="0.18" stop-color="#2a2828"/><stop offset="0.6" stop-color="#1e1c1c"/><stop offset="1" stop-color="#0c0b0b"/>
</linearGradient>
<linearGradient id="gLedge" x1="0" y1="0" x2="0" y2="1">
 <stop offset="0" stop-color="#e2e2e2"/><stop offset="0.45" stop-color="#dcdcdc"/><stop offset="0.5" stop-color="#d4d4d4"/><stop offset="1" stop-color="#cfcfcf"/>
</linearGradient>
<linearGradient id="gLedgeH" gradientUnits="userSpaceOnUse" x1="958" y1="0" x2="1900" y2="0">
 <stop offset="0" stop-color="#fff" stop-opacity="0.25"/><stop offset="0.3" stop-color="#fff" stop-opacity="0"/><stop offset="0.6" stop-color="#000" stop-opacity="0.02"/><stop offset="1" stop-color="#000" stop-opacity="0.04"/>
</linearGradient>
<radialGradient id="gBolt" cx="0.45" cy="0.4" r="0.6">
 <stop offset="0" stop-color="#202020"/><stop offset="0.75" stop-color="#1a1a1a"/><stop offset="0.9" stop-color="#3a3a3a"/><stop offset="1" stop-color="#0e0e0e"/>
</radialGradient>
<clipPath id="cpR"><path d="M1589 932 L1764 928 L1826 1055 L1622 1060 Z"/></clipPath>
</defs><rect x="766" y="144" width="1312" height="980" fill="#bcbcbc"/><path d="M766 144 L958 144 L1021 503 L766 503 Z" fill="#d6d6d6"/><path d="M766 144 L958.0 144 L958.7 148 L766 148 Z" fill="#c8c8c8"/><path d="M766 174 L963.2 174 L967.8 200 L766 200 Z" fill="#dedede"/><path d="M766 200 L967.8 200 L968.3 203 L766 203 Z" fill="#c4c4c4"/><path d="M766 283 L982.3 283 L982.9 286 L766 286 Z" fill="#c2c2c2"/><path d="M766 286 L982.9 286 L986.7 308 L766 308 Z" fill="#d2d2d2"/><path d="M766 308 L986.7 308 L989.0 321 L766 321 Z" fill="#dfdfdf"/><path d="M766 332 L990.9 332 L991.4 335 L766 335 Z" fill="#c4c4c4"/><path d="M766 406 L1003.9 406 L1004.4 409 L766 409 Z" fill="#c6c6c6"/><path d="M766 428 L1007.7 428 L1011.9 452 L766 452 Z" fill="#dddddd"/><path d="M766 452 L1011.9 452 L1012.4 455 L766 455 Z" fill="#c8c8c8"/><path d="M766 470 L1015.0 470 L1020.8 503 L766 503 Z" fill="#d9d9d9"/><path d="M958 144 L972 144 L1035 503 L1021 503 Z" fill="#b7b7b7"/><path d="M855 414 L927 414 L922 428 L893 443 L855 446 Z" fill="#b0b0b0"/><path d="M1726.0 144 L2078 144 L2078 495 L1687.4 495 Z" fill="#d6d6d6"/><path d="M1726.0 144 L2078 144 L2078 148 L1725.6 148 Z" fill="#c8c8c8"/><path d="M1722.5 176 L2078 176 L2078 198 L1720.1 198 Z" fill="#dedede"/><path d="M1720.1 198 L2078 198 L2078 201 L1719.7 201 Z" fill="#c4c4c4"/><path d="M1711.0 280 L2078 280 L2078 283 L1710.7 283 Z" fill="#c4c4c4"/><path d="M1708.3 305 L2078 305 L2078 318 L1706.9 318 Z" fill="#dfdfdf"/><path d="M1705.8 328 L2078 328 L2078 331 L1705.4 331 Z" fill="#c4c4c4"/><path d="M1698.1 398 L2078 398 L2078 402 L1697.6 402 Z" fill="#c6c6c6"/><path d="M1696.5 412 L2078 412 L2078 436 L1693.9 436 Z" fill="#dedede"/><path d="M1693.9 436 L2078 436 L2078 495 L1687.4 495 Z" fill="#d8d8d8"/><path d="M2040 144 C2060 150 2078 170 2078 200 L2078 144 Z" fill="#c8c8c8" opacity="0.6"/><line x1="1836" y1="144" x2="1791" y2="500" stroke="#c8c8c8" stroke-width="1.5" opacity="0.8"/><line x1="1956" y1="144" x2="1889" y2="500" stroke="#c8c8c8" stroke-width="1.5" opacity="0.8"/><line x1="2070" y1="207" x2="2007" y2="500" stroke="#c8c8c8" stroke-width="1.5" opacity="0.8"/><line x1="836" y1="144" x2="922" y2="507" stroke="#c8c8c8" stroke-width="1.5" opacity="0.8"/><line x1="1035" y1="274" x2="1700" y2="272" stroke="#c6c6c6" stroke-width="2"/><line x1="1229" y1="144" x2="1236" y2="500" stroke="#b8b8b8" stroke-width="3"/><line x1="1475" y1="144" x2="1470" y2="500" stroke="#b8b8b8" stroke-width="3"/><line x1="1122" y1="144" x2="1180" y2="198" stroke="#c4c4c4" stroke-width="1.5"/><line x1="1050" y1="318" x2="1200" y2="455" stroke="#c4c4c4" stroke-width="1.5"/><line x1="1560" y1="144" x2="1515" y2="194" stroke="#c4c4c4" stroke-width="1.5"/><line x1="1655" y1="308" x2="1530" y2="420" stroke="#c4c4c4" stroke-width="1.5"/><line x1="1035" y1="259" x2="1160" y2="258" stroke="#c2c2c2" stroke-width="1.5"/><line x1="1530" y1="256" x2="1690" y2="255" stroke="#c2c2c2" stroke-width="1.5"/><ellipse cx="1300" cy="188" rx="22" ry="5" fill="none" stroke="#c3c3c3" stroke-width="1.2"/><ellipse cx="1410" cy="188" rx="22" ry="5" fill="none" stroke="#c3c3c3" stroke-width="1.2"/><ellipse cx="1305" cy="310" rx="22" ry="5" fill="none" stroke="#c3c3c3" stroke-width="1.2"/><ellipse cx="1410" cy="310" rx="22" ry="5" fill="none" stroke="#c3c3c3" stroke-width="1.2"/><ellipse cx="1080" cy="178" rx="22" ry="5" fill="none" stroke="#c3c3c3" stroke-width="1.2"/><ellipse cx="1630" cy="178" rx="22" ry="5" fill="none" stroke="#c3c3c3" stroke-width="1.2"/><ellipse cx="1095" cy="300" rx="22" ry="5" fill="none" stroke="#c3c3c3" stroke-width="1.2"/><ellipse cx="1175" cy="300" rx="22" ry="5" fill="none" stroke="#c3c3c3" stroke-width="1.2"/><ellipse cx="1550" cy="300" rx="22" ry="5" fill="none" stroke="#c3c3c3" stroke-width="1.2"/><ellipse cx="1620" cy="300" rx="22" ry="5" fill="none" stroke="#c3c3c3" stroke-width="1.2"/><path d="M766 503 L1021 503 L1692 495 L2078 495 L2078 590 L766 590 Z" fill="#b9b9b9"/><path d="M766 520 L1021 515 L1700 508 L2078 510 L2078 555 L1700 550 L766 556 Z" fill="#b3b3b3"/><ellipse cx="778" cy="532" rx="12" ry="26" fill="#b6b6b6" stroke="#acacac" stroke-width="1.6"/><ellipse cx="888" cy="532" rx="12" ry="26" fill="#b6b6b6" stroke="#acacac" stroke-width="1.6"/><ellipse cx="1007" cy="532" rx="12" ry="26" fill="#b6b6b6" stroke="#acacac" stroke-width="1.6"/><ellipse cx="1125" cy="532" rx="12" ry="26" fill="#b6b6b6" stroke="#acacac" stroke-width="1.6"/><ellipse cx="1800" cy="532" rx="12" ry="26" fill="#b6b6b6" stroke="#acacac" stroke-width="1.6"/><ellipse cx="1843" cy="532" rx="12" ry="26" fill="#b6b6b6" stroke="#acacac" stroke-width="1.6"/><path d="M766 588 L935 588 L932 611 L766 622 Z" fill="#afafaf"/><path d="M766 652 C790 645 815 636 841 632 L932 622 L937 608 L958 594 L1843 585 C1880 582 1930 592 1967 628 L1940 690 C1910 689 1880 689 1850 689 L990 700 L870 703 C840 706 815 715 797 731 L766 771 Z" fill="url(#gLedge)"/><path d="M766 652 C790 645 815 636 841 632 L932 622 L937 608 L958 594 L1843 585 C1880 582 1930 592 1967 628 L1940 690 C1910 689 1880 689 1850 689 L990 700 L870 703 C840 706 815 715 797 731 L766 771 Z" fill="url(#gLedgeH)"/><path d="M766 687 C780 672 800 660 838 646 L974 641 L1845 633 C1880 634 1910 640 1940 660" fill="none" stroke="#cdcdcd" stroke-width="2"/><line x1="972" y1="600" x2="975" y2="700" stroke="#cfcfcf" stroke-width="2"/><line x1="1100" y1="592" x2="1103" y2="698" stroke="#cfcfcf" stroke-width="2"/><line x1="1228" y1="591" x2="1231" y2="697" stroke="#cfcfcf" stroke-width="2"/><line x1="1356" y1="590" x2="1359" y2="696" stroke="#cfcfcf" stroke-width="2"/><line x1="1484" y1="589" x2="1487" y2="694" stroke="#cfcfcf" stroke-width="2"/><line x1="1608" y1="587" x2="1611" y2="692" stroke="#cfcfcf" stroke-width="2"/><line x1="1732" y1="586" x2="1735" y2="691" stroke="#cfcfcf" stroke-width="2"/><line x1="1856" y1="586" x2="1859" y2="690" stroke="#cfcfcf" stroke-width="2"/><path d="M766 771 L797 731 C815 715 840 706 870 703 L990 700 L1850 689 C1890 689 1925 692 1940 705 C1970 760 2000 830 2078 905 L2078 1090 C2030 980 1990 900 1950 830 C1920 775 1880 745 1800 742 L870 760 C840 762 800 770 766 780 Z" fill="#b3b3b3"/><path d="M766 790 C800 770 840 762 870 760 L1800 742 C1880 745 1920 775 1950 830 C1990 900 2030 980 2078 1090" fill="none" stroke="#b8b8b8" stroke-width="3"/><ellipse cx="930" cy="728" rx="11" ry="27" fill="#b5b5b5" stroke="#adadad" stroke-width="1.6"/><ellipse cx="1058" cy="726" rx="11" ry="27" fill="#b5b5b5" stroke="#adadad" stroke-width="1.6"/><ellipse cx="1516" cy="712" rx="11" ry="27" fill="#b5b5b5" stroke="#adadad" stroke-width="1.6"/><ellipse cx="1642" cy="710" rx="11" ry="27" fill="#b5b5b5" stroke="#adadad" stroke-width="1.6"/><ellipse cx="1769" cy="708" rx="11" ry="27" fill="#b5b5b5" stroke="#adadad" stroke-width="1.6"/><path d="M800 745 C815 725 850 715 875 722 L880 760 C850 765 820 770 805 770 Z" fill="#b0b0b0"/><ellipse cx="840" cy="744" rx="36" ry="20" fill="none" stroke="#a9a9a9" stroke-width="2"/><path d="M766 795 C790 800 810 815 812 835 C812 850 790 858 766 850" fill="none" stroke="#ababab" stroke-width="2"/><ellipse cx="1920" cy="789" rx="36" ry="20" fill="none" stroke="#a8a8a8" stroke-width="2" opacity="0.7"/><ellipse cx="1998" cy="877" rx="40" ry="24" fill="none" stroke="#a8a8a8" stroke-width="2" opacity="0.7"/><ellipse cx="2078" cy="997" rx="40" ry="28" fill="none" stroke="#a8a8a8" stroke-width="2" opacity="0.7"/><path d="M1940 690 L1967 628 L2078 711 L2078 789 L1998 841 C1980 790 1960 730 1940 690 Z" fill="#c9c9c9"/><path d="M2021 587 L2036 594 L1946 756 L1915 722 Z" fill="#a9a9a9"/><path d="M2050 800 L2078 782 L2078 830 L2060 842 Z" fill="#a9a9a9" opacity="0.9"/><line x1="766" y1="822" x2="1100" y2="820" stroke="#c5c5c5" stroke-width="1.3"/><line x1="766" y1="907" x2="1110" y2="901" stroke="#c5c5c5" stroke-width="1.3"/><line x1="766" y1="1014" x2="1190" y2="1002" stroke="#c5c5c5" stroke-width="1.3"/><line x1="1480" y1="810" x2="1875" y2="810" stroke="#c5c5c5" stroke-width="1.3"/><line x1="1508" y1="885" x2="1930" y2="885" stroke="#c5c5c5" stroke-width="1.3"/><line x1="1527" y1="984" x2="2009" y2="984" stroke="#c5c5c5" stroke-width="1.3"/><line x1="1559" y1="1114" x2="2078" y2="1114" stroke="#c5c5c5" stroke-width="1.3"/><line x1="968" y1="782" x2="766" y2="1108" stroke="#c5c5c5" stroke-width="1.3"/><line x1="1110" y1="760" x2="990" y2="1030" stroke="#c5c5c5" stroke-width="1.3"/><line x1="821" y1="751" x2="766" y2="798" stroke="#c5c5c5" stroke-width="1.3"/><line x1="1614" y1="747" x2="1756" y2="1124" stroke="#c5c5c5" stroke-width="1.3"/><line x1="1756" y1="739" x2="1954" y2="1124" stroke="#c5c5c5" stroke-width="1.3"/><line x1="1895" y1="810" x2="2078" y2="1060" stroke="#c5c5c5" stroke-width="1.3"/><line x1="1200" y1="1002" x2="1180" y2="1124" stroke="#c5c5c5" stroke-width="1.3"/><path d="M932 941 L1120 937 C1126 937 1128 940 1126 946 L1084.6 1080 L1075 1086 L846 1092 C840 1092 838 1089 841 1085 L922 945.6 Z" fill="#e6e6e6"/><g fill="#bcbcbc"><path d="M1049 945.6 L1081.7 945 L1107.8 965.6 L1100.6 988 Z"/><path d="M982.9 947.2 L1016 946.7 L1092.6 1012 L1084.6 1036.9 Z"/><path d="M928.5 960 L934.9 948.5 L949.3 948 L1075.8 1063.3 L1071.5 1076.6 L1050.2 1077 Z"/><path d="M915.7 982.4 L1011.7 1077.7 L969.4 1078.5 L902.9 1005.7 Z"/><path d="M889.2 1030.5 L934.9 1080 L895.7 1081.7 L874 1056.9 Z"/></g><path d="M1581 925.6 L1769 922 L1841 1059.4 L1832 1065 L1616 1072 L1609.7 1066.6 L1575.2 929.6 Z" fill="#e6e6e6"/><g fill="#bcbcbc" clip-path="url(#cpR)"><path d="M1550 902.9 L1900 1097.5 L1900 1115.7 L1550 921.1 Z"/><path d="M1550 938.9 L1900 1133.5 L1900 1152.3 L1550 957.7 Z"/><path d="M1550 977.3 L1900 1171.9 L1900 1194.1 L1550 999.5 Z"/><path d="M1550 854.8 L1900 1049.4 L1900 1068.8 L1550 874.2 Z"/><path d="M1550 817.8 L1900 1012.4 L1900 1035.8 L1550 841.2 Z"/></g><path d="M1648 895 L1652 872 L1665 858 L1760 858 L1775 875 L1782 905 L1778 975 L1766 996 L1740 1002 L1685 1003 L1660 990 L1646 965 Z" fill="#b6b6b6"/><path d="M1662 870 L1672 861 L1752 861 L1762 872 L1770 905 L1672 905 Z" fill="#bdbdbd"/><path d="M1685 872 L1748 872 L1756 900 L1692 900 Z" fill="#c1c1c1" stroke="#b2b2b2" stroke-width="2"/><path d="M1648 912 L1782 910 M1650 985 L1775 985 M1652 950 L1778 948" stroke="#adadad" stroke-width="2" fill="none"/><path d="M1704 906 L1714 906 L1708 1002 L1698 1002 Z" fill="#b0b0b0"/><path d="M1755 906 L1765 906 L1758 1000 L1748 1000 Z" fill="#b0b0b0"/><clipPath id="cpLow"><rect x="1180" y="925" width="340" height="200"/></clipPath><path d="M1195 925 A158 84 0 0 1 1511 925 L1510 1000 A155 86 0 0 1 1200 1000 Z" fill="#121010"/><ellipse cx="1353" cy="936" rx="151" ry="98" fill="#3a3939" clip-path="url(#cpLow)"/><ellipse cx="1353" cy="936" rx="151" ry="98" fill="none" stroke="#4c4b4b" stroke-width="2" clip-path="url(#cpLow)"/><ellipse cx="1353" cy="925" rx="144" ry="87" fill="#0f0e0e"/><path d="M1210 930 C1225 985 1290 1012 1353 1012 C1420 1012 1485 985 1497 925" fill="none" stroke="#2c2b2b" stroke-width="2"/><path d="M1175 700 L1243 676 L1363 752 C1385 766 1401 785 1401 810 L1401 950 L1297 950 L1290 880 Z" fill="#b08030"/><path d="M1236 698 L1372 788 L1384 815 L1300 800 L1228 742 Z" fill="#7c5820"/><path d="M1250 688 L1366 762 C1380 772 1392 785 1396 800" fill="none" stroke="#c49848" stroke-width="9"/><circle cx="1364" cy="806" r="11" fill="#1a1a1a"/><circle cx="1166" cy="656" r="50" fill="#a97a2c"/><path d="M1120 640 A50 50 0 0 1 1150 608" fill="none" stroke="#c09040" stroke-width="5"/><line x1="1342" y1="477" x2="1165" y2="690" stroke="url(#gUp)" stroke-width="120" stroke-linecap="round"/><line x1="1298" y1="438" x2="1118" y2="650" stroke="#c9a04c" stroke-width="9" stroke-linecap="round" opacity="0.6"/><path d="M1190 640 L1270 700 L1240 745 L1170 700 Z" fill="#6e4b18" opacity="0.45"/><path d="M1283 470 C1292 432 1322 416 1350 417 C1380 418 1400 432 1410 450 L1395 472 L1290 480 Z" fill="#be8e3a"/><path d="M1300 452 C1320 430 1370 428 1398 452" fill="none" stroke="#cda455" stroke-width="5" opacity="0.7"/><path d="M1385 432 L1418 432 C1425 432 1428 436 1428 442 L1428 470 L1385 470 Z" fill="#b88838"/><rect x="1392" y="437" width="16" height="26" fill="#d2a450"/><rect x="1395" y="440" width="10" height="22" fill="#7a5418"/><path d="M1340 464 L1418 464 C1425 464 1428 468 1428 476 L1428 545 C1428 551 1425 554 1418 554 L1340 554 A45 45 0 0 1 1340 464 Z" fill="#b98a35"/><path d="M1300 490 A45 45 0 0 1 1340 464 L1418 464 C1425 464 1428 468 1428 476" fill="none" stroke="#cba050" stroke-width="6"/><path d="M1297 525 A45 45 0 0 0 1340 554 L1418 554" fill="none" stroke="#4e3510" stroke-width="3"/><circle cx="1340" cy="509" r="29" fill="url(#gBolt)"/><circle cx="1338" cy="507" r="20" fill="#161616"/><line x1="1153" y1="697" x2="1340" y2="848" stroke="url(#gLow)" stroke-width="104" stroke-linecap="round"/><path d="M1107 680 A47 47 0 0 1 1180 660 L1395 830" fill="none" stroke="#c59a48" stroke-width="12" opacity="0.9"/><path d="M1116 735 L1299 872" stroke="#3a2608" stroke-width="5"/><path d="M1106.7 705 A47 47 0 0 1 1169 652.8" fill="none" stroke="#c59a48" stroke-width="9"/><circle cx="1155" cy="713" r="30" fill="#b58634"/><circle cx="1155" cy="713" r="30" fill="none" stroke="#c59c4c" stroke-width="5"/><circle cx="1156" cy="715" r="24" fill="#ad7d2e"/><path d="M1131 708 A25 25 0 0 1 1176 698" fill="none" stroke="#4a3210" stroke-width="3.5"/><path d="M1297 951 L1297 880 A50 44 0 0 1 1347 836 L1351 836 A50 44 0 0 1 1401 880 L1401 951 Z" fill="#b08030"/><path d="M1301 880 A48 42 0 0 1 1347 841 L1351 841 A48 42 0 0 1 1397 880" fill="none" stroke="#c59a48" stroke-width="9"/><circle cx="1346" cy="890" r="35" fill="#2a2a2a"/><circle cx="1346" cy="890" r="31" fill="#131313"/><circle cx="1348" cy="893" r="24" fill="#1c1c1c"/><path d="M1429 433 L1440 415 L1517 415 L1534 435 L1535 550 L1521 570.5 L1442 570.5 L1429 552 Z" fill="url(#gBlk)"/><path d="M1447 430 L1447 558 M1525 438 L1525 553" stroke="#3c3a3a" stroke-width="3" opacity="0.8"/><path d="M1440 417 L1517 417" stroke="#2a2222" stroke-width="2"/><path d="M1535 427 L1732 433.5 L1735 437 L1735 456 L1535 460 Z" fill="#1b1919"/><path d="M1545 432 L1730 437" stroke="#383636" stroke-width="2"/><rect x="1535" y="458" width="23" height="67" fill="#1e1c1c"/><rect x="1546" y="472" width="10" height="40" fill="#2c2a2a"/><path d="M1556 457 L1787 458 L1787 479 L1777 484 L1773 542 L1775 545 L1774 567 L1570 568.5 L1554 560 Z" fill="#161414"/><path d="M1560 458 L1786 459 L1786 478 L1576 484 Z" fill="#242222"/><path d="M1572 543 L1774 541 L1774 566 L1572 568 Z" fill="#242222"/><path d="M1578 462 L1784 461 M1578 482 L1778 478 M1576 545 L1772 543 M1576 564 L1772 563" stroke="#3e3a3a" stroke-width="1.5" fill="none" stroke-dasharray="3 2"/><path d="M1572 486 L1572 541" stroke="#2e2c2c" stroke-width="3"/><rect x="770" y="148" width="86" height="334" rx="7" fill="#282828"/><rect x="797" y="160" width="32" height="2" fill="#686868"/><rect x="797" y="166" width="32" height="2" fill="#686868"/><rect x="776" y="180" width="74" height="40" rx="5" fill="#414141"/><g fill="none" stroke="#a8804a" stroke-width="1.8"><path d="M796 186 L807 192 L807 206 L796 212 L785 206 L785 192 Z"/></g><g fill="none" stroke="#8a8a8a" stroke-width="1.4"><path d="M785 192 L796 199 L807 192 M796 199 L796 212"/></g><path d="M822 195 L838 195 L830 204 Z" fill="#8c8c8c"/><rect x="776" y="226" width="74" height="40" rx="5" fill="#585858"/><rect x="776" y="268" width="74" height="40" rx="0" fill="#585858"/><rect x="776" y="310" width="74" height="40" rx="0" fill="#585858"/><rect x="776" y="352" width="74" height="40" rx="0" fill="#585858"/><rect x="776" y="394" width="74" height="40" rx="0" fill="#46607c"/><rect x="776" y="436" width="74" height="40" rx="5" fill="#585858"/><path d="M806 262 C801 256 797 250 795 246 C793 242 797 240 800 243 L803 247 L803 234 C803 230 808 230 808 234 L808 244 L809 231 C809 227 814 227 814 231 L814 244 L816 232 C816 228 821 228 821 232 L820 245 L823 238 C824 234 829 235 828 239 L824 252 C822 258 818 262 812 262 Z" fill="#d8d8d8"/><g fill="none" stroke="#c8c8c8" stroke-width="2"><path d="M813 275 V301 M800 288 H826"/><path d="M808 280 L813 275 L818 280 M808 296 L813 301 L818 296 M805 283 L800 288 L805 293 M821 283 L826 288 L821 293"/></g><g fill="none" stroke="#c8c8c8" stroke-width="2"><path d="M808 318.5 A13.5 13.5 0 0 0 806 343"/><path d="M818 343.5 A13.5 13.5 0 0 0 820 319"/><path d="M805 336 L805 344 L813 344 M821 326 L821 318 L813 318"/></g><g fill="none" stroke="#c8c8c8" stroke-width="2"><rect x="800" y="359" width="26" height="26"/><path d="M800 376 H809 V385"/><path d="M810 375 L822 363 M815 363 L822 363 L822 370"/></g><g fill="none" stroke="#f0f0f0" stroke-width="2"><path d="M802 403 V425 M824 403 V425 M802 403 H824 M802 425 H824"/></g><g fill="#f0f0f0"><rect x="798" y="399" width="7" height="7"/><rect x="821" y="399" width="7" height="7"/><rect x="798" y="422" width="7" height="7"/><rect x="821" y="422" width="7" height="7"/></g><g fill="none" stroke="#c8c8c8" stroke-width="2"><path d="M803 450 A11 11 0 0 1 819 446 M823 462 A11 11 0 0 1 807 466 M801 460 A11 11 0 0 1 801 452 M825 452 A11 11 0 0 1 825 460"/><path d="M813 445 V467 M802 456 H824 M809 449 L813 445 L817 449 M809 463 L813 467 L817 463 M806 452 L802 456 L806 460 M820 452 L824 456 L820 460"/></g><path d="M822 440 L828 440 L828 446 Z" fill="#c8c8c8"/><path d="M798 472 L798 466 L804 472 Z" fill="#c8c8c8"/><rect x="1868" y="160" width="32" height="2" fill="#4a4a4a"/><rect x="1868" y="166" width="32" height="2" fill="#4a4a4a"/><path d="M1951 191 L1980 191 L1966 233 Z" fill="#8ccf4a"/><ellipse cx="1966" cy="227" rx="9" ry="7" fill="#4d7fd8"/><path d="M1954 232 L1981 232 L1981 265 L1954 265 Z" fill="#efefef"/><path d="M1954 232 L1981 232 L1981 241 L1954 241 Z" fill="#d6d6de"/><path d="M1981 247 L2022 236 L2022 258 Z" fill="#dc5a34"/><ellipse cx="2020" cy="247" rx="5" ry="11" fill="#c94a28"/><path d="M1950 248 L1910 237 L1910 262 Z" fill="#e2e2e2"/><ellipse cx="1911" cy="249" rx="4" ry="12" fill="#d0d0d0"/><path d="M1966 258 L1952 285 L1980 285 Z" fill="#7a7a7a"/><ellipse cx="1968" cy="284" rx="18" ry="14" fill="#dcdcdc"/><text x="1973" y="179" font-family="Liberation Sans" font-size="18" fill="#f4f4f4" text-anchor="middle">y</text><text x="2040" y="252" font-family="Liberation Sans" font-size="18" fill="#f4f4f4" text-anchor="middle">x</text><path d="M1936 342 L1918 350 L1936 358" fill="none" stroke="#e6e6e6" stroke-width="2"/><text x="1945" y="357" font-family="Liberation Sans" font-size="22" fill="#d4d4d4" opacity="0.35">Persp</text><rect x="2029" y="180" width="10" height="12" fill="none" stroke="#cfcfcf" stroke-width="1.5" opacity="0.6"/></svg>
</div></body></html>
